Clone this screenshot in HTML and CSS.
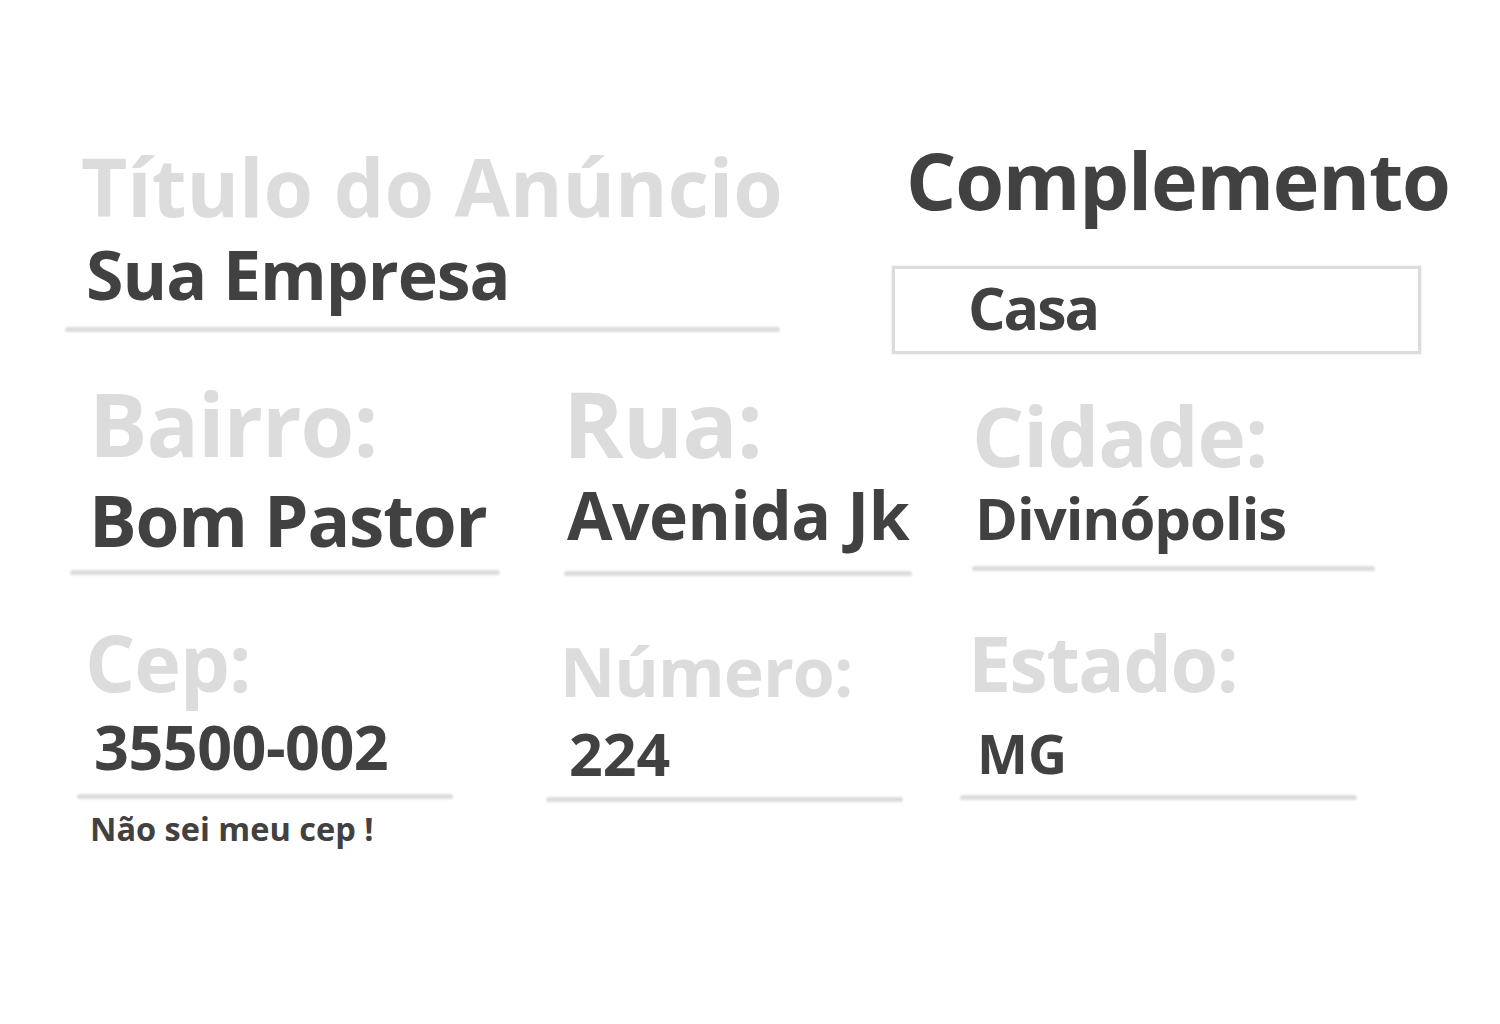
FILE: index.html
```
<!DOCTYPE html>
<html lang="pt-BR">
<head>
<meta charset="utf-8">
<title>Cadastro de Anúncio</title>
<link rel="stylesheet" href="styles.css">
</head>
<body>
<main class="form">
  <section class="row row-1">
    <div class="field f-titulo">
      <div class="label">Título do Anúncio</div>
      <div class="value">Sua Empresa</div>
      <div class="line"></div>
    </div>
    <div class="field f-compl">
      <div class="heading">Complemento</div>
      <div class="box"><span class="value">Casa</span></div>
    </div>
  </section>
  <section class="row row-2">
    <div class="field f-bairro">
      <div class="label">Bairro:</div>
      <div class="value">Bom Pastor</div>
      <div class="line"></div>
    </div>
    <div class="field f-rua">
      <div class="label">Rua:</div>
      <div class="value">Avenida Jk</div>
      <div class="line"></div>
    </div>
    <div class="field f-cidade">
      <div class="label">Cidade:</div>
      <div class="value">Divinópolis</div>
      <div class="line"></div>
    </div>
  </section>
  <section class="row row-3">
    <div class="field f-cep">
      <div class="label">Cep:</div>
      <div class="value">35500-002</div>
      <div class="line"></div>
      <div class="hint">Não sei meu cep !</div>
    </div>
    <div class="field f-numero">
      <div class="label">Número:</div>
      <div class="value">224</div>
      <div class="line"></div>
    </div>
    <div class="field f-estado">
      <div class="label">Estado:</div>
      <div class="value">MG</div>
      <div class="line"></div>
    </div>
  </section>
</main>
</body>
</html>
```
FILE: styles.css
```
html, body {
  margin: 0;
  padding: 0;
  background: #ffffff;
}

body {
  font-family: "Open Sans", "Noto Sans", "DejaVu Sans", sans-serif;
  font-weight: 700;
  width: 1500px;
  height: 1024px;
  overflow: hidden;
}

.form {
  display: flex;
  flex-direction: column;
}

.row {
  display: flex;
  align-items: flex-start;
}

.row-1 { height: 360px; }
.row-2 { height: 240px; }
.row-3 { height: 300px; }

.field {
  display: flex;
  flex-direction: column;
  flex: none;
}

.label, .value, .heading, .hint {
  line-height: 1;
  white-space: nowrap;
}

.label { color: #dcdcdc; }
.value, .heading, .hint { color: #414141; }

.line {
  height: 5px;
  background: #dcdcdc;
  border-radius: 3px;
  filter: blur(1.3px);
}

/* Row 1 */
.f-titulo { margin-left: 65px; width: 715px; }
.f-titulo .label { font-size: 80px; margin: 146px 0 0 16px; }
.f-titulo .value { font-size: 68px; letter-spacing: -1px; margin: 13.6px 0 0 21px; }
.f-titulo .line { margin-top: 19.4px; }

.f-compl { margin-left: 112px; width: 529px; }
.f-compl .heading { font-size: 79px; letter-spacing: -1.2px; margin: 139.8px 0 0 14px; }
.box {
  margin-top: 47.2px;
  height: 73.4px;
  border: 3px solid #dcdcdc;
  box-shadow: 0 0 2px #dcdcdc;
  padding: 8.6px 0 0 73px;
  box-sizing: content-box;
}
.box .value { display: block; font-size: 59px; letter-spacing: -2px; }

/* Row 2 */
.f-bairro { margin-left: 70px; width: 430px; }
.f-bairro .label { font-size: 87px; letter-spacing: -1px; margin: 19.7px 0 0 19px; }
.f-bairro .value { font-size: 71px; letter-spacing: -1.2px; margin: 17.3px 0 0 19px; }
.f-bairro .line { margin-top: 15px; }

.f-rua { margin-left: 64px; width: 348px; }
.f-rua .label { font-size: 92px; letter-spacing: -1px; margin: 17.3px 0 0 -1px; }
.f-rua .value { font-size: 66px; letter-spacing: -0.5px; margin: 12.1px 0 0 3px; }
.f-rua .line { margin-top: 23.6px; }

.f-cidade { margin-left: 60px; width: 403px; }
.f-cidade .label { font-size: 82px; letter-spacing: -1px; margin: 34.2px 0 0 0; }
.f-cidade .value { font-size: 58px; letter-spacing: -1px; margin: 13.3px 0 0 3px; }
.f-cidade .line { margin-top: 18.5px; }

/* Row 3 */
.f-cep { margin-left: 77px; width: 376px; }
.f-cep .label { font-size: 79px; letter-spacing: -1px; margin: 21.8px 0 0 8px; }
.f-cep .value { font-size: 61px; letter-spacing: -0.5px; margin: 15px 0 0 17px; }
.f-cep .line { margin-top: 17.2px; }
.f-cep .hint { font-size: 32.5px; margin: 14.1px 0 0 13px; }

.f-numero { margin-left: 93px; width: 357px; }
.f-numero .label { font-size: 68px; letter-spacing: -1px; margin: 36.6px 0 0 14px; }
.f-numero .value { font-size: 59px; margin: 19px 0 0 23px; }
.f-numero .line { margin-top: 14.4px; }

.f-estado { margin-left: 57px; width: 397px; }
.f-estado .label { font-size: 77px; letter-spacing: -1.5px; margin: 23.6px 0 0 8px; }
.f-estado .value { font-size: 54px; margin: 25.4px 0 0 17px; }
.f-estado .line { margin-top: 15px; }
```
